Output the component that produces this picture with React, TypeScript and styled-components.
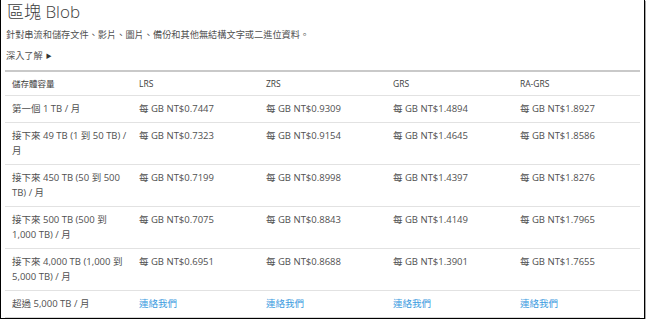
import styled, { createGlobalStyle } from "styled-components"

const GlobalStyle = createGlobalStyle`
  body {
    margin: 0;
    background: #fff;
    font-family: "Open Sans", "Noto Sans CJK TC", sans-serif;
    color: #505050;
  }
`

type Tier = {
  capacity: string[]
  prices: string[] | null
}

const tiers: Tier[] = [
  { capacity: ["第一個 1 TB / 月"], prices: ["0.7447", "0.9309", "1.4894", "1.8927"] },
  { capacity: ["接下來 49 TB (1 到 50 TB) /", "月"], prices: ["0.7323", "0.9154", "1.4645", "1.8586"] },
  { capacity: ["接下來 450 TB (50 到 500", "TB) / 月"], prices: ["0.7199", "0.8998", "1.4397", "1.8276"] },
  { capacity: ["接下來 500 TB (500 到", "1,000 TB) / 月"], prices: ["0.7075", "0.8843", "1.4149", "1.7965"] },
  { capacity: ["接下來 4,000 TB (1,000 到", "5,000 TB) / 月"], prices: ["0.6951", "0.8688", "1.3901", "1.7655"] },
  { capacity: ["超過 5,000 TB / 月"], prices: null },
]

const redundancy = ["LRS", "ZRS", "GRS", "RA-GRS"]

const Frame = styled.div`
  width: 645px;
  height: 319px;
  box-sizing: border-box;
  border-left: 1px solid #000;
  border-right: 1px solid #000;
  border-bottom: 1px solid #000;
  box-shadow: 1px 1px 1px rgba(0, 0, 0, 0.35);
  padding: 0 4px 0 4px;
  overflow: hidden;
  background: #fff;
`

const Title = styled.h2`
  margin: 0;
  padding-left: 2px;
  font-size: 17px;
  font-weight: 300;
  line-height: 24px;
  color: #3c3c3c;
`

const Description = styled.p`
  margin: 4px 0 0;
  padding-left: 1px;
  font-size: 9.2px;
  line-height: 14px;
  color: #505050;
`

const LearnMore = styled.a`
  display: inline-flex;
  align-items: center;
  gap: 3px;
  margin-top: 7px;
  padding-left: 1px;
  font-size: 9.2px;
  line-height: 14px;
  color: #505050;
  text-decoration: none;
`

const Arrow = styled.span`
  font-size: 6px;
  color: #333;
`

const PriceTable = styled.table`
  width: 635px;
  margin-top: 6px;
  border-collapse: collapse;
  table-layout: fixed;
  border-top: 2px solid #c9c9c9;
`

const HeadCell = styled.th`
  padding: 4px 6px 4px 7px;
  font-size: 8.5px;
  line-height: 15px;
  font-weight: 400;
  color: #3c3c3c;
  text-align: left;
  border-bottom: 1px solid #e2e2e2;
`

const Row = styled.tr<{ $last?: boolean }>`
  border-bottom: ${(p) => (p.$last ? "2px solid #d6d6d6" : "1px solid #e2e2e2")};
`

const Cell = styled.td`
  padding: 5px 6px 6px 7px;
  font-size: 9.5px;
  line-height: 15px;
  color: #505050;
  vertical-align: top;
`

const Line = styled.span`
  display: block;
  white-space: nowrap;
`

const ContactLink = styled.a`
  color: #3a9be0;
  text-decoration: none;
`

export default function App() {
  return (
    <>
      <GlobalStyle />
      <Frame>
        <Title>區塊 Blob</Title>
        <Description>針對串流和儲存文件、影片、圖片、備份和其他無結構文字或二進位資料。</Description>
        <LearnMore href="#">
          深入了解 <Arrow>▶</Arrow>
        </LearnMore>
        <PriceTable>
          <thead>
            <tr>
              <HeadCell>儲存體容量</HeadCell>
              {redundancy.map((r) => (
                <HeadCell key={r}>{r}</HeadCell>
              ))}
            </tr>
          </thead>
          <tbody>
            {tiers.map((t, i) => (
              <Row key={i} $last={i === tiers.length - 1}>
                <Cell>
                  {t.capacity.map((line, j) => (
                    <Line key={j}>{line}</Line>
                  ))}
                </Cell>
                {t.prices
                  ? t.prices.map((p) => <Cell key={p}>每 GB NT${p}</Cell>)
                  : redundancy.map((r) => (
                      <Cell key={r}>
                        <ContactLink href="#">連絡我們</ContactLink>
                      </Cell>
                    ))}
              </Row>
            ))}
          </tbody>
        </PriceTable>
      </Frame>
    </>
  )
}
